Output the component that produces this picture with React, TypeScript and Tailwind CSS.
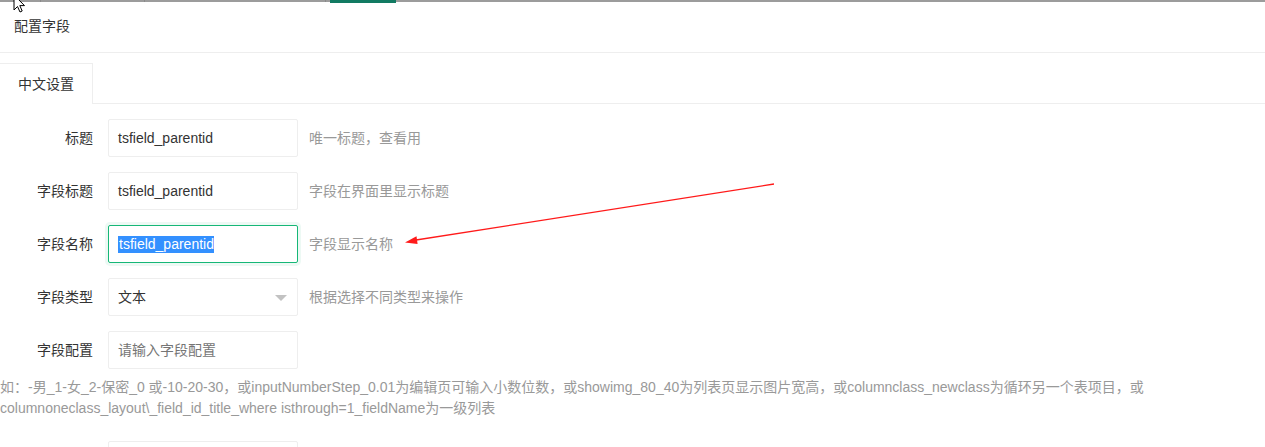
import React from "react";

const font = {
  fontFamily: '"Liberation Sans", Arial, "Noto Sans CJK SC", sans-serif',
};

type Row = { label: string; value?: string; placeholder?: string; hint?: string; focused?: boolean; select?: boolean };

const rows: Row[] = [
  { label: "标题", value: "tsfield_parentid", hint: "唯一标题，查看用" },
  { label: "字段标题", value: "tsfield_parentid", hint: "字段在界面里显示标题" },
  { label: "字段名称", value: "tsfield_parentid", hint: "字段显示名称", focused: true },
  { label: "字段类型", value: "文本", hint: "根据选择不同类型来操作", select: true },
  { label: "字段配置", placeholder: "请输入字段配置" },
];

function FieldBox({ row }: { row: Row }) {
  const border = row.focused
    ? "border-[#16b777] shadow-[0_0_0_3px_rgba(22,183,119,0.08)]"
    : "border-[#eeeeee]";
  return (
    <div className={`relative w-[190px] h-[38px] border rounded-[2px] bg-white flex items-center pl-[9px] text-[14px] ${border}`}>
      {row.focused ? (
        <span className="bg-[#3390ff] text-white leading-[17px] pl-px">{row.value}</span>
      ) : row.value ? (
        <span className="text-[#333]">{row.value}</span>
      ) : (
        <span className="text-[#757575]">{row.placeholder}</span>
      )}
      {row.select && (
        <span className="absolute right-[10px] top-[16px] w-0 h-0 border-x-[6px] border-x-transparent border-t-[6px] border-t-[#c2c2c2]" />
      )}
    </div>
  );
}

export default function App() {
  return (
    <div className="relative w-full h-[447px] overflow-hidden bg-white text-[#333]" style={font}>
      {/* top strip of the page behind */}
      <div className="flex items-start h-[2px] bg-[#9c9c9c]">
        <div className="w-[40px] h-[2px]" />
        <div className="w-px h-[2px] bg-[#8a8a8a]" />
        <div className="w-[103px] h-[2px]" />
        <div className="w-px h-[2px] bg-[#8a8a8a]" />
        <div className="w-[180px] h-[2px]" />
        <div className="w-px h-[2px] bg-[#8a8a8a]" />
        <div className="ml-[4px] w-[66px] h-[3px] bg-[#127a62]" />
      </div>

      {/* header */}
      <div className="h-[51px] border-b border-[#eeeeee] flex items-center pl-[14px] text-[14px] pb-[2px]">
        配置字段
      </div>

      {/* tabs */}
      <div className="mt-[10px] flex border-b border-[#eeeeee] h-[41px]">
        <div className="h-[41px] -mb-px px-[18px] border-t border-r border-[#eeeeee] bg-white flex items-center text-[14px]">
          中文设置
        </div>
      </div>

      {/* form */}
      <div className="pt-[15px] flex flex-col gap-[15px]">
        {rows.map((row) => (
          <div key={row.label} className="flex items-center">
            <div className="w-[108px] pr-[15px] text-right text-[14px] text-[#333]">{row.label}</div>
            <FieldBox row={row} />
            {row.hint && <div className="ml-[11px] text-[14px] text-[#999]">{row.hint}</div>}
          </div>
        ))}
      </div>

      <div className="mt-[8px] text-[14px] leading-[21px] text-[#999] whitespace-nowrap">
        <div>如：-男_1-女_2-保密_0 或-10-20-30，或inputNumberStep_0.01为编辑页可输入小数位数，或showimg_80_40为列表页显示图片宽高，或columnclass_newclass为循环另一个表项目，或</div>
        <div>columnoneclass_layout\_field_id_title_where isthrough=1_fieldName为一级列表</div>
      </div>

      <div className="mt-[22px] ml-[108px] w-[190px] h-[38px] border border-[#eeeeee] rounded-[2px]" />

      {/* annotation arrow */}
      <svg className="absolute inset-0 pointer-events-none" width="1265" height="447">
        <line x1="774" y1="184" x2="416" y2="240" stroke="#ff1a1a" strokeWidth="1.3" />
        <polygon points="405,242.4 417.6,243.9 416.5,236.2" fill="#ff1a1a" />
      </svg>

      {/* mouse cursor */}
      <svg className="absolute left-[13px] top-[-6px] pointer-events-none" width="16" height="22" viewBox="0 0 16 22">
        <path d="M1 1 L1 16 L4.5 12.5 L7 18 L9.2 17 L6.8 11.6 L11.5 11.6 Z" fill="#fff" stroke="#000" strokeWidth="1" strokeLinejoin="miter" />
      </svg>
    </div>
  );
}
